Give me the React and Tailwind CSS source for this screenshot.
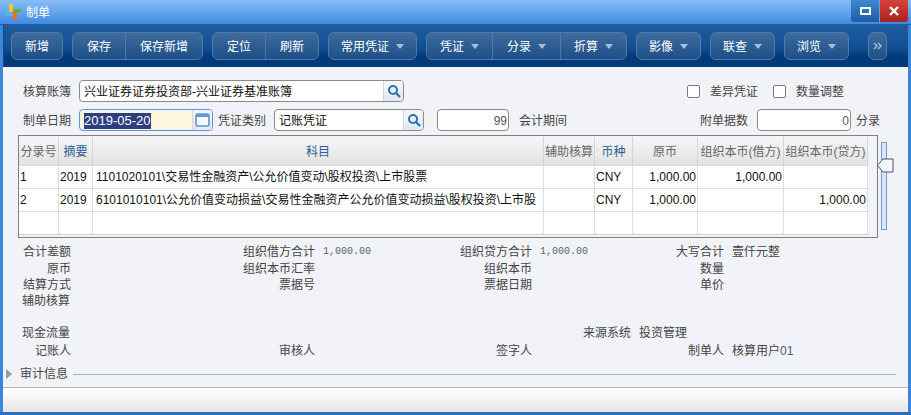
const Caret = () => <span className="ml-[7px] inline-block w-0 h-0 border-x-[4px] border-x-transparent border-t-[5px] border-t-[#a9bfd6]" />;

function Seg({ w, children, caret, last }) {
  return (
    <div className={`flex items-center justify-center h-full ${w} ${last ? "" : "border-r border-[#4d7aa8]"}`}>
      <span className="pt-[2px]">{children}</span>
      {caret && <Caret />}
    </div>
  );
}
const Group = ({ children, className = "" }) => (
  <div className={`flex h-[28px] rounded-[6px] border border-[#4f7ba8] bg-gradient-to-b from-[#3d6c9e] to-[#1d4f88] text-white text-[12px] ${className}`}>{children}</div>
);

const SearchIcon = () => (
  <svg width="14" height="14" viewBox="0 0 14 14" fill="none" stroke="#2a70b8" strokeWidth="2">
    <circle cx="6" cy="6" r="4" />
    <path d="M9 9l4 4" strokeWidth="2.4" />
  </svg>
);
const CalIcon = () => (
  <svg width="15" height="14" viewBox="0 0 15 14" fill="none">
    <rect x="1" y="1" width="13" height="12" rx="1.5" stroke="#5f97d0" strokeWidth="1.6" fill="#f4f8fc" />
    <rect x="1" y="1" width="13" height="3" fill="#5f97d0" />
  </svg>
);
const Logo = () => (
  <svg className="shrink-0" width="16" height="16" viewBox="0 0 16 16">
    <path d="M4 2a2 2 0 0 1 2-2h2v8H4Z" fill="#f7c520" />
    <path d="M8 5h7a1 1 0 0 1 1 1v2H8Z" fill="#5cb531" />
    <path d="M2 8h6v4H2a2 2 0 0 1-2-2a2 2 0 0 1 2-2Z" fill="#4fb4ea" />
    <path d="M8 8h4v6a2 2 0 0 1-2 2H8Z" fill="#ee6a1c" />
  </svg>
);

function Field({ w, children, btn, className = "" }) {
  return (
    <div className={`flex h-[22px] rounded-[4px] border border-[#8a8a8a] bg-white overflow-hidden ${w} ${className}`}>
      <div className="flex-1 flex items-center px-1 pt-[2px] text-[12px] text-[#111] whitespace-nowrap overflow-hidden">{children}</div>
      {btn && <div className="w-[20px] flex items-center justify-center border-l border-[#d4d4d4] bg-gradient-to-b from-[#f6f6f6] to-[#e4e8ee]">{btn}</div>}
    </div>
  );
}

const Check = ({ children, className = "" }) => (
  <div className={`flex items-center ${className}`}>
    <span className="w-[13px] h-[13px] rounded-[2px] border border-[#7a7a7a] bg-white" />
    <span className="ml-[10px] pt-[1px]">{children}</span>
  </div>
);

const cols = ["w-[40px]", "w-[34px]", "w-[451px]", "w-[51px]", "w-[38px]", "w-[65px]", "w-[86px]", "w-[84px]"];
const heads = [
  ["分录号", false], ["摘要", true], ["科目", true], ["辅助核算", false],
  ["币种", true], ["原币", false], ["组织本币(借方)", false], ["组织本币(贷方)", false],
];
const rows = [
  ["1", "2019", "1101020101\\交易性金融资产\\公允价值变动\\股权投资\\上市股票", "", "CNY", "1,000.00", "1,000.00", ""],
  ["2", "2019", "6101010101\\公允价值变动损益\\交易性金融资产公允价值变动损益\\股权投资\\上市股", "", "CNY", "1,000.00", "", "1,000.00"],
  ["", "", "", "", "", "", "", ""],
];

const L = ({ children, cls = "" }) => <div className={`text-right ${cls}`}>{children}</div>;
const V = ({ children, mono }) => (
  <div className={`pl-2 whitespace-nowrap ${mono ? "[font-family:'Liberation_Mono',monospace] text-[10px] text-[#55656f]" : ""}`}>{children}</div>
);

export default function App() {
  return (
    <div className="w-[911px] h-[415px] flex flex-col overflow-hidden bg-[#3a86da] [font-family:'Liberation_Sans','Noto_Sans_CJK_SC',sans-serif] text-[12px] text-[#444]">
      <div className="h-[25px] shrink-0 flex items-start bg-gradient-to-b from-[#86bef8] to-[#3d8bdf] border-b border-[#1f5fa8]">
        <div className="ml-[5px] mt-[4px]"><Logo /></div>
        <span className="ml-[5px] mt-[5px] text-white text-[12px] leading-[16px]">制单</span>
        <div className="ml-auto mr-[3px] flex h-[22px]">
          <div className="w-[29px] flex items-center justify-center rounded-bl-[3px] bg-gradient-to-b from-[#3f87d2] to-[#1e5ca4] border-r border-[#6ea2d8]">
            <span className="w-[11px] h-[8px] border-2 border-white" />
          </div>
          <div className="w-[28px] flex items-center justify-center rounded-br-[3px] bg-gradient-to-b from-[#d8423c] to-[#a62320]">
            <svg width="10" height="10" viewBox="0 0 10 10"><path d="M1 1l8 8M9 1l-8 8" stroke="#fff" strokeWidth="2.4" /></svg>
          </div>
        </div>
      </div>

      <div className="flex-1 mx-[3px] flex flex-col min-h-0">
        <div className="h-[42px] shrink-0 flex items-center pl-[7px] gap-[9px] bg-[linear-gradient(#1f5c9f_0%,#114f92_55%,#003a7c_75%,#043a78_100%)] border-l border-[#14497f]">
          <Group><Seg w="w-[50px]" last>新增</Seg></Group>
          <Group><Seg w="w-[53px]">保存</Seg><Seg w="w-[76px]" last>保存新增</Seg></Group>
          <Group><Seg w="w-[53px]">定位</Seg><Seg w="w-[52px]" last>刷新</Seg></Group>
          <Group><Seg w="w-[87px]" caret last>常用凭证</Seg></Group>
          <Group><Seg w="w-[66px]" caret>凭证</Seg><Seg w="w-[68px]" caret>分录</Seg><Seg w="w-[65px]" caret last>折算</Seg></Group>
          <Group><Seg w="w-[63px]" caret last>影像</Seg></Group>
          <Group><Seg w="w-[63px]" caret last>联查</Seg></Group>
          <Group><Seg w="w-[63px]" caret last>浏览</Seg></Group>
          <Group className="ml-[10px]">
            <div className="w-[17px] flex items-center justify-center">
              <svg width="9" height="8" viewBox="0 0 9 8" fill="none" stroke="#a9c3de" strokeWidth="1.4"><path d="M1 1l3 3-3 3M5 1l3 3-3 3" /></svg>
            </div>
          </Group>
        </div>

        <div className="flex-1 min-h-0 flex flex-col bg-[#f2f3f8]">
          <div className="mt-[13px] flex items-center h-[22px]">
            <div className="w-[68px] pt-[2px] text-right shrink-0">核算账簿</div>
            <Field w="w-[325px]" className="ml-2" btn={<SearchIcon />}>兴业证券证券投资部-兴业证券基准账簿</Field>
            <Check className="ml-[283px]">差异凭证</Check>
            <Check className="ml-[15px]">数量调整</Check>
          </div>

          <div className="mt-[7px] flex items-center h-[22px]">
            <div className="w-[68px] pt-[2px] text-right shrink-0">制单日期</div>
            <div className="ml-2 w-[134px] h-[22px] flex rounded-[4px] border border-[#4a9be8] bg-[#fdf6dc] overflow-hidden">
              <div className="flex-1 flex items-center pl-1 pt-[1px]">
                <span className="bg-[#2b3f80] text-white text-[13px] leading-[16px]">2019-05-20</span>
              </div>
              <div className="w-[20px] flex items-center justify-center border-l border-[#d4d4d4] bg-gradient-to-b from-[#f6f6f6] to-[#e4e8ee]"><CalIcon /></div>
            </div>
            <div className="ml-[5px] w-[48px] pt-[2px] whitespace-nowrap">凭证类别</div>
            <Field w="w-[150px]" className="ml-2" btn={<SearchIcon />}>记账凭证</Field>
            <div className="ml-[13px] w-[72px] h-[22px] pt-[1px] rounded-[4px] border border-[#8a8a8a] bg-white flex items-center justify-end pr-[1px] text-[#555]">99</div>
            <div className="ml-[10px] w-[48px] pt-[2px] whitespace-nowrap">会计期间</div>
            <div className="ml-[133px] w-[48px] pt-[2px] whitespace-nowrap">附单据数</div>
            <div className="ml-[9px] w-[94px] h-[22px] pt-[1px] rounded-[4px] border border-[#8a8a8a] bg-white flex items-center justify-end pr-[1px] text-[#555]">0</div>
            <div className="ml-[5px] pt-[2px] whitespace-nowrap">分录</div>
          </div>

          <div className="mt-[4px] flex">
            <div className="ml-[15px] w-[860px] h-[103px] border border-[#808080] pt-[1px] shrink-0">
              <div className="w-[849px] border-b border-[#cfcfcf]">
                <div className="flex h-[28px] bg-gradient-to-b from-[#f6f6f6] to-[#e2e2e2]">
                  {heads.map(([t, blue], i) => (
                    <div key={i} className={`${cols[i]} shrink-0 flex items-center justify-center pt-[1px] whitespace-nowrap border-r border-[#d4d4d4] ${blue ? "text-[#2c6099]" : "text-[#666]"}`}>{t}</div>
                  ))}
                </div>
                {rows.map((r, ri) => (
                  <div key={ri} className="flex h-[23px] bg-white border-t border-[#dcdcdc] text-[#111]">
                    {r.map((c, i) => (
                      <div key={i} className={`${cols[i]} shrink-0 flex items-center overflow-hidden whitespace-nowrap border-r border-[#dcdcdc] ${i >= 5 ? "justify-end px-[1px]" : i === 2 ? "pl-[3px]" : "px-[1px]"}`}>{c}</div>
                    ))}
                  </div>
                ))}
              </div>
            </div>
            <div className="relative ml-[3px] mt-[7px] w-[6px] h-[88px] bg-[#d8e6f6] border border-[#6f9ad0]">
              <svg className="absolute left-[-5px] top-[15px]" width="17" height="15" viewBox="0 0 17 15">
                <path d="M0.5 7.5L6 1H16V14H6Z" fill="#f2f5fa" stroke="#555" />
              </svg>
            </div>
          </div>

          <div className="mt-[5px] grid grid-cols-[68px_172px_72px_145px_72px_120px_72px_1fr] grid-rows-[18px_16px_16px_16px_15px_18px_18px] items-center leading-[16px]">
            <L>合计差额</L><V /><L>组织借方合计</L><V mono>1,000.00</V><L>组织贷方合计</L><V mono>1,000.00</V><L>大写合计</L><V>壹仟元整</V>
            <L>原币</L><V /><L>组织本币汇率</L><V /><L>组织本币</L><V /><L>数量</L><V />
            <L>结算方式</L><V /><L>票据号</L><V /><L>票据日期</L><V /><L>单价</L><V />
            <L cls="pr-[1px]">辅助核算</L><div className="col-span-7" />
            <div className="col-span-8" />
            <L cls="pr-[1px]">现金流量</L>
            <div className="col-start-5 col-span-4 pl-[123px] whitespace-nowrap">来源系统<span className="ml-2">投资管理</span></div>
            <L>记账人</L><V /><L>审核人</L><V /><L>签字人</L><V /><L>制单人</L>
            <V>核算用户<span className="text-[#3f5f7f]">01</span></V>
          </div>

          <div className="mt-[6px] flex items-center h-[16px]">
            <span className="ml-[3px] w-0 h-0 border-y-[5px] border-y-transparent border-l-[6px] border-l-[#9a9a9a]" />
            <span className="ml-[8px] whitespace-nowrap">审计信息</span>
            <span className="ml-[5px] w-[823px] h-px bg-[#a5b4c8]" />
          </div>

          <div className="flex-1" />
          <div className="h-[25px] shrink-0 border-t border-[#b5b5b5] bg-gradient-to-b from-white to-[#e6e6e6]" />
        </div>
      </div>
      <div className="h-[3px] shrink-0 bg-[#2a6fc0]" />
    </div>
  );
}
